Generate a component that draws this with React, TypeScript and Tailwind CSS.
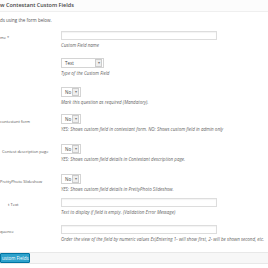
const rows = [
  { label: "me *", kind: "input", desc: "Custom Field name", h: "h-[27px]" },
  { label: "", kind: "select", value: "Text", desc: "Type of the Custom Field", h: "h-[29px]" },
  { label: "", kind: "select", value: "No", desc: "Mark this question as required (Mandatory).", h: "h-[27px]" },
  { label: "contestant form", kind: "select", value: "No", desc: "YES: Shows custom field in contestant form. NO: Shows custom field in admin only", h: "h-[30px]" },
  { label: "Contest description page", kind: "select", value: "No", desc: "YES: Shows custom field details in Contestant description page.", h: "h-[30px]" },
  { label: "PrettyPhoto Slideshow", kind: "select", value: "No", desc: "YES: Shows custom field details in PrettyPhoto Slideshow.", h: "h-[24px]" },
  { label: "t Text", kind: "input", desc: "Text to display if field is empty. (Validation Error Message)", h: "h-[27px]" },
  { label: "quence", kind: "input", desc: "Order the view of the field by numeric values Ex)Entering 1- will show first, 2- will be shown second, etc.", h: "h-[25px]" },
];

function Select({ value }: { value: string }) {
  const wide = value === "Text";
  return (
    <div
      className={`flex items-center justify-between border border-[#d4d4d4] bg-white h-[10px] ${wide ? "w-[43px]" : "w-[20px]"}`}
    >
      <span className="pl-[3px] text-[4.5px] leading-none text-[#444]">{value}</span>
      <span className="flex items-center justify-center w-[7px] h-[8px] mr-[1px] bg-[#eeeeee] border border-[#cccccc] text-[4px] leading-none text-[#777]">
        ▾
      </span>
    </div>
  );
}

export default function App() {
  return (
    <div
      className="w-[268px] h-[268px] overflow-hidden bg-white text-[#444]"
      style={{ fontFamily: '"Open Sans", "Noto Sans", sans-serif' }}
    >
      {/* header */}
      <div className="pt-[2px] h-[12px] border-b border-[#efefef] bg-[#fcfcfc]">
        <h2 className="text-[5.5px] font-semibold leading-[7px] text-[#444] whitespace-nowrap">
          w Contestant Custom Fields
        </h2>
      </div>
      <p className="mt-[5px] text-[4.5px] leading-[6px] text-[#555] whitespace-nowrap">
        ds using the form below.
      </p>

      {/* form table */}
      <div className="mt-[8px] flex flex-col">
        {rows.map((r, i) => (
          <div key={i} className={`flex ${r.h}`}>
            <div
              className={`w-[61px] shrink-0 text-[4px] leading-[6px] text-[#555] whitespace-nowrap ${r.kind === "input" ? "pt-[4px]" : "pt-[5px]"} ${r.label === "t Text" ? "pl-[8px]" : r.label === "Contest description page" ? "pl-[2px]" : ""}`}
            >
              {r.label}
            </div>
            <div className="flex flex-col">
              {r.kind === "input" ? (
                <div className="w-[156px] h-[9px] border border-[#dddddd] bg-white shadow-[inset_0_1px_1px_rgba(0,0,0,0.05)]" />
              ) : (
                <Select value={r.value ?? ""} />
              )}
              <p className="mt-[2px] text-[4.5px] leading-[6px] italic text-[#666] whitespace-nowrap">
                {r.desc}
              </p>
            </div>
          </div>
        ))}
      </div>

      {/* footer */}
      <div className="mt-[2px] flex items-stretch h-[12px] border-y border-[#e8e8e8] bg-[#f7f7f7]">
        <button className="w-[30px] bg-[#2ea2cc] border border-[#0074a2] text-white text-[4.5px] leading-none whitespace-nowrap text-left pl-[1px] rounded-[1px]">
          ustom Fields
        </button>
      </div>
    </div>
  );
}
